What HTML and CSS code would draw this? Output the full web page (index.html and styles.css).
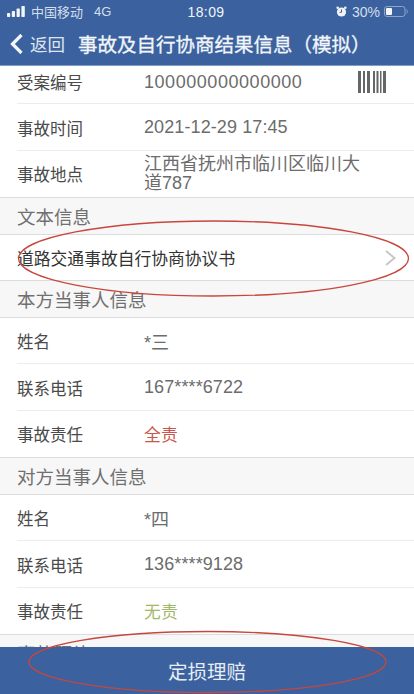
FILE: index.html
```html
<!DOCTYPE html>
<html lang="zh">
<head>
<meta charset="utf-8">
<title>事故及自行协商结果信息（模拟）</title>
<link rel="stylesheet" href="styles.css">
</head>
<body>
<div class="app">
  <header class="top">
    <div class="status">
      <div class="status-left">
        <svg class="signal" width="18" height="11" viewBox="0 0 18 11"><rect x="0" y="7" width="3.200" height="4" rx=".7"/><rect x="4.800" y="5" width="3.200" height="6" rx=".7"/><rect x="9.600" y="2.500" width="3.200" height="8.500" rx=".7"/><rect x="14.400" y="0" width="3.400" height="11" rx=".7"/></svg>
        <span>中国移动</span><span class="net">4G</span>
      </div>
      <div class="clock">18:09</div>
      <div class="status-right">
        <svg width="11" height="11" viewBox="0 0 11 11"><circle cx="5.500" cy="6" r="4.600" fill="#f1f3f7"/><path d="M5.500 3.500V6.300H3.600" stroke="#3b629f" stroke-width="1" fill="none"/><circle cx="1.700" cy="1.700" r="1.300" fill="#f1f3f7"/><circle cx="9.300" cy="1.700" r="1.300" fill="#f1f3f7"/></svg>
        <span class="pct">30%</span>
        <svg width="24" height="11" viewBox="0 0 24 11"><rect x=".5" y=".5" width="20.500" height="10" rx="2.500" fill="none" stroke="#8fa6c9"/><rect x="2" y="2" width="6" height="7" rx="1" fill="#f5f7fa"/><path d="M22.500 3.500c1 .6 1 3.400 0 4" stroke="#8fa6c9" fill="none"/></svg>
      </div>
    </div>
    <nav class="nav">
      <svg class="back" width="15" height="22" viewBox="0 0 15 22"><path d="M12.500 2 3.500 11l9 9" fill="none" stroke="#f2f5f9" stroke-width="3.200"/></svg>
      <span class="back-label">返回</span>
      <h1 class="title">事故及自行协商结果信息（模拟）</h1>
    </nav>
  </header>

  <main class="content">
    <div class="row first">
      <span class="label">受案编号</span><span class="value wide">100000000000000</span>
      <svg class="barcode" width="29" height="22" viewBox="0 0 29 22" fill="#666"><rect x="0" width="3" height="22"/><rect x="5" width="2" height="22"/><rect x="9" width="3" height="22"/><rect x="15" width="2" height="22"/><rect x="18.500" width="2" height="22"/><rect x="22" width="1.500" height="22"/><rect x="25" width="3" height="22"/></svg>
    </div>
    <div class="row"><span class="label">事故时间</span><span class="value">2021-12-29 17:45</span></div>
    <div class="row end"><span class="label">事故地点</span><span class="value multi">江西省抚州市临川区临川大道787</span></div>

    <div class="section">文本信息</div>
    <div class="row end link"><span>道路交通事故自行协商协议书</span>
      <svg class="chev" width="13" height="18" viewBox="0 0 13 18"><path d="M2 2l8.500 7L2 16" fill="none" stroke="#c7c7c7" stroke-width="2"/></svg>
    </div>

    <div class="section">本方当事人信息</div>
    <div class="row"><span class="label">姓名</span><span class="value">*三</span></div>
    <div class="row"><span class="label">联系电话</span><span class="value">167****6722</span></div>
    <div class="row end"><span class="label">事故责任</span><span class="value cjk red">全责</span></div>

    <div class="section">对方当事人信息</div>
    <div class="row"><span class="label">姓名</span><span class="value">*四</span></div>
    <div class="row"><span class="label">联系电话</span><span class="value">136****9128</span></div>
    <div class="row end"><span class="label">事故责任</span><span class="value cjk green">无责</span></div>

    <div class="section">事故照片</div>
  </main>

  <footer class="action">定损理赔</footer>

  <svg class="marks" width="414" height="694" viewBox="0 0 414 694">
    <ellipse cx="213.500" cy="258.500" rx="195" ry="37.500"/>
    <ellipse cx="207.500" cy="662" rx="178.500" ry="30.500"/>
  </svg>
</div>
</body>
</html>
```
FILE: styles.css
```css
* { box-sizing: border-box; }
html, body { margin: 0; padding: 0; }
body { font-family: "Liberation Sans", "Noto Sans CJK SC", sans-serif; background: #fff; }
.app { position: relative; width: 414px; height: 694px; overflow: hidden; display: flex; flex-direction: column; }

.top { height: 66px; flex: none; background: #3b629f; color: #eef2f7; border-bottom: 1px solid #7f9cc4; }
.status { height: 22px; padding: 1px 6px 0 7px; display: grid; grid-template-columns: 1fr auto 1fr; align-items: center; font-size: 13px; color: #d4deec; }
.status-left { display: flex; align-items: center; gap: 6px; }
.signal { fill: #f2f5f9; }
.net { margin-left: 5px; }
.clock { font-size: 14px; color: #f2f5f9; letter-spacing: .4px; padding-right: 3px; }
.status-right { display: flex; justify-content: flex-end; align-items: center; gap: 4px; }
.pct { font-size: 14px; margin-left: 1px; }

.nav { height: 43px; display: flex; align-items: center; padding-left: 9px; }
.back { flex: none; }
.back-label { font-size: 17.500px; margin-left: 6px; color: #dfe6f0; width: 35px; white-space: nowrap; }
.title { margin: 0 0 0 13px; font-size: 19.500px; font-weight: 400; white-space: nowrap; color: #f2f5f9; -webkit-text-stroke: .3px #f2f5f9; }

.content { flex: 1; min-height: 0; overflow: hidden; background: #fff; }
.row { position: relative; height: 46.670px; flex: none; display: flex; align-items: center; padding-left: 17px; font-size: 16.500px; color: #4a4a4a; }
.row::after { content: ""; position: absolute; left: 17px; right: 0; bottom: 0; height: 1px; background: #ececec; }
.row.end::after { left: 0; background: #dcdcdc; }
.row.first { height: 38.300px; padding-bottom: 6px; }
.row.link { height: 46px; justify-content: space-between; padding-right: 17px; font-size: 16.800px; color: #333; }
.label { width: 127px; flex: none; }
.value { font-size: 18px; color: #6c6c6c; white-space: nowrap; letter-spacing: .1px; }
.value.wide { letter-spacing: .55px; }
.value.multi { white-space: normal; width: 222px; line-height: 19px; letter-spacing: 0; }
.value.cjk { font-size: 16.800px; }
.value.red { color: #c9564c; }
.value.green { color: #a3b768; }
.barcode { margin-left: auto; margin-right: 27px; }

.section { height: 37px; flex: none; display: flex; align-items: center; padding-left: 17px; font-size: 18.500px; color: #707070; background: #f7f7f8; border-bottom: 1px solid #dcdcdc; }

.action { flex: none; height: 47px; background: #3b629f; color: #e8edf5; font-size: 19.500px; display: flex; align-items: center; justify-content: center; }

.marks { position: absolute; left: 0; top: 0; pointer-events: none; }
.marks ellipse { fill: none; stroke: #c8463c; stroke-width: 1.300; }
```
